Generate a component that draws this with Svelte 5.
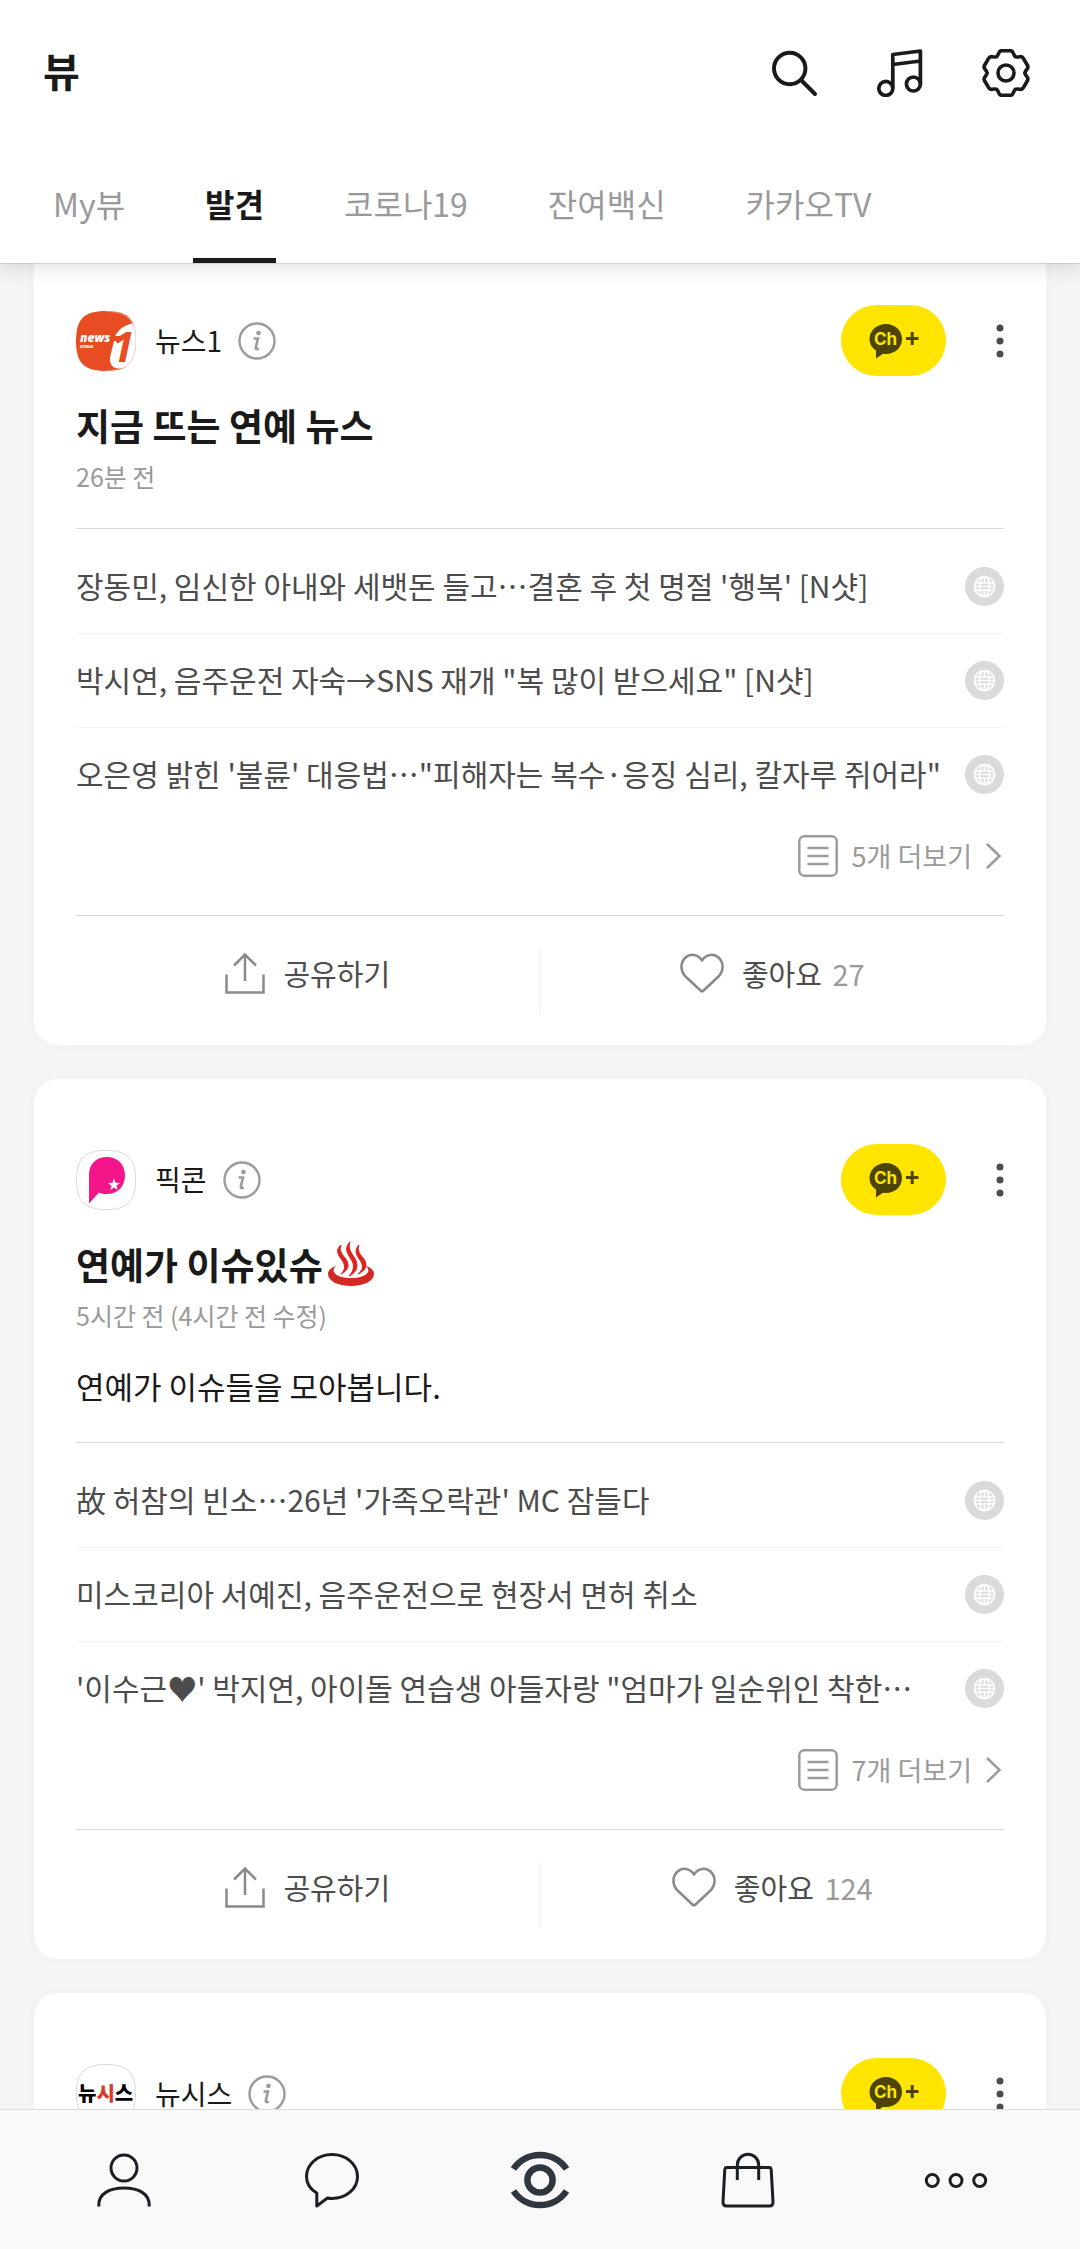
<script lang="ts">
  type Card = {
    channel: string;
    logo: string;
    title?: string;
    spring?: boolean;
    time?: string;
    desc?: string;
    items: string[];
    more?: number;
    likes?: number;
  };

  const tabs = ['My뷰', '발견', '코로나19', '잔여백신', '카카오TV'];
  let active = $state('발견');

  const cards: Card[] = [
    {
      channel: '뉴스1',
      logo: 'news1',
      title: '지금 뜨는 연예 뉴스',
      time: '26분 전',
      items: [
        "장동민, 임신한 아내와 세뱃돈 들고⋯결혼 후 첫 명절 '행복' [N샷]",
        '박시연, 음주운전 자숙→SNS 재개 "복 많이 받으세요" [N샷]',
        '오은영 밝힌 \'불륜\' 대응법⋯"피해자는 복수·응징 심리, 칼자루 쥐어라"'
      ],
      more: 5,
      likes: 27
    },
    {
      channel: '픽콘',
      logo: 'pickcon',
      title: '연예가 이슈있슈',
      spring: true,
      time: '5시간 전 (4시간 전 수정)',
      desc: '연예가 이슈들을 모아봅니다.',
      items: [
        "故 허참의 빈소⋯26년 '가족오락관' MC 잠들다",
        '미스코리아 서예진, 음주운전으로 현장서 면허 취소',
        "'이수근♥' 박지연, 아이돌 연습생 아들자랑 \"엄마가 일순위인 착한⋯"
      ],
      more: 7,
      likes: 124
    },
    { channel: '뉴시스', logo: 'newsis', items: [] }
  ];

  // One tooth of the gear, centred on the origin and pointing up; repeated every 60 degrees.
  function gearPath(cx: number, cy: number): string {
    const tooth = [
      [-9.2, -16.4], [-7.9, -18], [-7.2, -20], [-6.4, -22.4], [-4, -22.4],
      [4, -22.4], [6.4, -22.4], [7.2, -20], [7.9, -18], [9.2, -16.4]
    ];
    let d = '';
    for (let i = 0; i < 6; i++) {
      const a = (i * Math.PI) / 3;
      const p = tooth.map(([x, y]) =>
        (cx + x * Math.cos(a) - y * Math.sin(a)).toFixed(2) + ' ' +
        (cy + x * Math.sin(a) + y * Math.cos(a)).toFixed(2)
      );
      d += `${i ? 'L' : 'M'}${p[0]}Q${p[1]} ${p[2]}Q${p[3]} ${p[4]}L${p[5]}Q${p[6]} ${p[7]}Q${p[8]} ${p[9]}`;
    }
    return d + 'Z';
  }
  const gear = gearPath(24, 24);
</script>

<div class="app">
  <header class="top">
    <div class="bar">
      <h1>뷰</h1>
      <div class="tools">
        <button aria-label="검색">
          <svg width="48" height="48" viewBox="0 0 48 48" fill="none" stroke="#1a1a1a" stroke-width="4" stroke-linecap="round">
            <circle cx="19.7" cy="19.5" r="15.7" /><path d="M31 31L45 45" />
          </svg>
        </button>
        <button aria-label="음악">
          <svg width="48" height="48" viewBox="0 0 48 48" fill="none" stroke="#1a1a1a" stroke-width="3.7" stroke-linejoin="round">
            <path d="M16.8 39.5V5.5L44.4 2V35M16.8 15.5L44.4 12" />
            <circle cx="9.8" cy="39.4" r="7" /><circle cx="37.4" cy="35" r="7" />
          </svg>
        </button>
        <button aria-label="설정">
          <svg width="48" height="48" viewBox="0 0 48 48" fill="none" stroke="#1a1a1a" stroke-width="3.6" stroke-linejoin="round">
            <path d={gear} /><circle cx="24" cy="24" r="8" />
          </svg>
        </button>
      </div>
    </div>
    <nav class="tabs">
      {#each tabs as tab}
        <button class="tab" class:on={tab === active} onclick={() => (active = tab)}>{tab}</button>
      {/each}
    </nav>
  </header>

  <main class="feed">
    {#each cards as card, i}
      <article class="card" class:continued={i === 0}>
        <div class="profile">
          <span class="logo">
            {#if card.logo === 'news1'}
              <svg width="60" height="60" viewBox="0 0 60 60">
                <defs><clipPath id="sq"><path d="M30 0C52 0 60 8 60 30S52 60 30 60 0 52 0 30 8 0 30 0Z" /></clipPath></defs>
                <g clip-path="url(#sq)">
                  <rect width="60" height="60" fill="#e84c22" />
                  <path d="M39 25C43 18 49 13 60 12V42C57 53 51 58 42 57.500C35 57 33 51 34.500 44L38 30H45L46.500 25Z" fill="#fff" />
                </g>
                <text x="35" y="51" class="one">1</text>
                <text x="4" y="31" class="news">news</text>
                <text x="4" y="37" class="korea">KOREA</text>
                <path d="M30 .5C51 .5 59.500 9 59.500 30S51 59.500 30 59.500" fill="none" stroke="#d9cfc8" stroke-opacity=".5" />
              </svg>
            {:else if card.logo === 'pickcon'}
              <svg width="60" height="60" viewBox="0 0 60 60">
                <path d="M30 .5C51.500 .5 59.500 8.500 59.500 30S51.500 59.500 30 59.500 .5 51.500 .5 30 8.500 .5 30 .5Z" fill="#fff" stroke="#d9d9d9" />
                <path d="M13 53V25C13 14 20 7 31 7S49 15 49 25.500C49 36 42 44 31 44C28 44 25 43.500 23 42.500L13.500 53Z" fill="#f5158a" />
                <path d="M38 28.500L39.600 32.800L44 33L40.500 35.800L41.800 40L38 37.600L34.200 40L35.500 35.800L32 33L36.400 32.800Z" fill="#fff" />
              </svg>
            {:else}
              <svg width="60" height="60" viewBox="0 0 60 60">
                <path d="M30 .5C51.500 .5 59.500 8.500 59.500 30S51.500 59.500 30 59.500 .5 51.500 .5 30 8.500 .5 30 .5Z" fill="#fff" stroke="#d9d9d9" />
                <text x="2" y="37" class="newsis">뉴<tspan fill="#d8392b">시</tspan>스</text>
              </svg>
            {/if}
          </span>
          <span class="name">{card.channel}</span>
          <button class="info" aria-label="채널 정보">
            <svg width="38" height="38" viewBox="0 0 38 38">
              <circle cx="19" cy="19" r="17.500" fill="none" stroke="#9c9c9c" stroke-width="2.400" />
              <circle cx="20.500" cy="11" r="2.300" fill="#9c9c9c" />
              <path d="M15.500 16.500H20L17.800 25.500Q17.300 28 20.800 26.500" fill="none" stroke="#9c9c9c" stroke-width="2.600" />
            </svg>
          </button>
          <button class="follow" aria-label="채널 추가">
            <svg width="50" height="36" viewBox="0 0 50 36">
              <path d="M17 1C26 1 33 7.500 33 16S26 31 17 31C16 31 15 31 14 30.800L7 35.500V27.500C3 25 .5 21 .5 16C.5 7.500 8 1 17 1Z" fill="#4c4400" />
              <text x="5" y="22" class="ch">Ch</text>
              <path d="M37 15.500H49.500M43.200 9V22" stroke="#4c4400" stroke-width="3" />
            </svg>
          </button>
          <button class="kebab" aria-label="더보기 메뉴">
            <svg width="8" height="36" viewBox="0 0 8 36" fill="#4c4c4c">
              <circle cx="4" cy="5" r="3.500" /><circle cx="4" cy="18" r="3.500" /><circle cx="4" cy="31" r="3.500" />
            </svg>
          </button>
        </div>

        {#if card.title}
          <h2>
            {card.title}{#if card.spring}<svg class="spring" role="img" aria-label="온천" width="48" height="48" viewBox="0 0 48 48">
                <path d="M9 26C3 28 1 31 1 34C1 41 11 46 24 46S47 41 47 34C47 31 45 28 39 26C41 28 42 30 41 32C39 36 32 38 24 38S9 36 7 32C6 30 7 28 9 26Z" fill="#d22a22" />
                <path d="M14 5C8 10 11 15 15 20C19 26 18 30 14 34C22 30 23 24 18 18C14 13 12 10 14 5ZM23 2C17 8 20 13 24 19C28 25 27 31 22 36C31 32 32 24 27 17C23 11 21 8 23 2ZM32 5C27 10 29 15 33 20C37 26 36 30 31 34C40 30 41 24 36 18C32 13 30 10 32 5Z" fill="#e0221c" stroke="#e0221c" />
              </svg>{/if}
          </h2>
          <p class="time">{card.time}</p>
          {#if card.desc}<p class="desc">{card.desc}</p>{/if}

          <ul class="list">
            {#each card.items as item}
              <li>
                <a href="#article">
                  <span class="headline">{item}</span>
                  <svg width="39" height="39" viewBox="0 0 39 39" fill="none" stroke="#fff" stroke-width="1.700">
                    <circle cx="19.500" cy="19.500" r="19.500" fill="#dadada" stroke="none" />
                    <circle cx="19.500" cy="19.500" r="10" />
                    <ellipse cx="19.500" cy="19.500" rx="5" ry="10" />
                    <path d="M19.500 9.500V16M19.500 23V29.500M9.500 19.500H29.500M11 16H28M11 23H28" />
                  </svg>
                </a>
              </li>
            {/each}
          </ul>

          <button class="more">
            <svg width="40" height="42" viewBox="0 0 40 42" fill="none" stroke="#9c9c9c" stroke-width="2.500">
              <rect x="1.300" y="1.300" width="37.400" height="39.400" rx="5" />
              <path d="M9.500 13H30.500M9.500 21H30.500M9.500 29H30.500" />
            </svg>
            <span>{card.more}개 더보기</span>
            <svg width="18" height="28" viewBox="0 0 18 28" fill="none" stroke="#9c9c9c" stroke-width="2.500"><path d="M1 2L13.500 14L1 26" /></svg>
          </button>

          <div class="actions">
            <button>
              <svg width="40" height="42" viewBox="0 0 40 42" fill="none" stroke="#8a8a8a" stroke-width="2.500">
                <path d="M1.500 22.500V40.500H38.500V22.500M20 29V2.500M9 13.500L20 2.500L31 13.500" />
              </svg>
              <span>공유하기</span>
            </button>
            <button>
              <svg width="44" height="42" viewBox="0 0 44 42" fill="none" stroke="#8a8a8a" stroke-width="2.500" stroke-linejoin="round">
                <path d="M22 8.500C18 2 10 1 5 6C0 11 .5 19 5 24L20.500 38.500Q22 40 23.500 38.500L39 24C43.500 19 44 11 39 6C34 1 26 2 22 8.500Z" />
              </svg>
              <span>좋아요 <em>{card.likes}</em></span>
            </button>
          </div>
        {/if}
      </article>
    {/each}
  </main>

  <nav class="dock">
    <a href="#friends" aria-label="친구">
      <svg width="60" height="60" viewBox="0 0 60 60" fill="none" stroke="#1b1e23" stroke-width="3">
        <circle cx="30" cy="18" r="13" /><path d="M4.800 56.500V55C4.800 44 15 38 30 38S55.200 44 55.200 55V56.500" />
      </svg>
    </a>
    <a href="#chats" aria-label="채팅">
      <svg width="60" height="60" viewBox="0 0 60 60" fill="none" stroke="#1b1e23" stroke-width="3" stroke-linejoin="round">
        <path d="M14.800 43C8 39 4.500 33 4.500 26.500C4.500 14 16 4.500 30 4.500S55.500 14 55.500 26.500S44 48.500 30 48.500C28.500 48.500 27 48.500 25.500 48L14.800 56Z" />
      </svg>
    </a>
    <a href="#view" aria-label="뷰">
      <svg width="60" height="60" viewBox="0 0 60 60" fill="none" stroke="#2f3640" stroke-width="6.500">
        <circle cx="30" cy="30" r="12.600" /><path d="M3.500 19A32 32 0 0 1 56.500 19M3.500 41A32 32 0 0 0 56.500 41" />
      </svg>
    </a>
    <a href="#shop" aria-label="쇼핑">
      <svg width="60" height="60" viewBox="0 0 60 60" fill="none" stroke="#1b1e23" stroke-width="3" stroke-linejoin="round">
        <path d="M9 17.500H51Q53 17.500 53.200 19.500L55 52Q55 56 51.500 56H8.500Q5 56 5 52L6.800 19.500Q7 17.500 9 17.500Z" />
        <path d="M19.300 30V15A10.700 10.700 0 0 1 40.700 15V30" />
      </svg>
    </a>
    <a href="#etc" aria-label="더보기">
      <svg width="64" height="60" viewBox="0 0 64 60" fill="none" stroke="#1b1e23" stroke-width="3">
        <circle cx="8.300" cy="30.500" r="6" /><circle cx="32" cy="30.500" r="6" /><circle cx="55.700" cy="30.500" r="6" />
      </svg>
    </a>
  </nav>
</div>

<style>
  :global(body) {
    background: #f4f4f4;
  }
  .app {
    display: flex;
    flex-direction: column;
    height: 100vh;
    color: #1a1a1a;
    font-family: 'Noto Sans CJK KR', sans-serif;
  }
  button {
    padding: 0;
    border: 0;
    background: none;
    color: inherit;
    font: inherit;
    cursor: pointer;
  }
  svg {
    display: block;
    flex: none;
  }
  h1, h2, p, ul {
    margin: 0;
    padding: 0;
  }

  .top {
    z-index: 1;
    flex: none;
    background: #fff;
    box-shadow: 0 1px 1px rgba(0, 0, 0, 0.1), 0 4px 18px rgba(0, 0, 0, 0.13);
  }
  .bar {
    display: flex;
    align-items: center;
    justify-content: space-between;
    padding: 48px 50px 0 43px;
  }
  h1 {
    padding-bottom: 6px;
    font-size: 40px;
    line-height: 44px;
    font-weight: 700;
  }
  .tools {
    display: flex;
    gap: 58px;
  }
  .tabs {
    display: flex;
    gap: 56px;
    padding: 48px 41px 0;
  }
  .tab {
    padding: 33px 12px 31px;
    border-bottom: 5px solid transparent;
    color: #9a9a9a;
    font-size: 32px;
    line-height: 48px;
    white-space: nowrap;
  }
  .tab.on {
    border-color: #1a1a1a;
    color: #1a1a1a;
    font-weight: 700;
  }

  .feed {
    flex: 1;
    min-height: 0;
    overflow-y: auto;
    scrollbar-width: none;
    padding: 0 34px;
  }
  .card {
    margin-bottom: 34px;
    padding: 65px 42px 0;
    border-radius: 24px;
    background: #fff;
    box-shadow: 0 0 12px rgba(0, 0, 0, 0.02);
  }
  .card.continued {
    padding-top: 42px;
    border-radius: 0 0 24px 24px;
  }
  .profile {
    display: flex;
    align-items: center;
    height: 71px;
  }
  .name {
    margin: 0 16px 0 19px;
    padding-bottom: 2px;
    font-size: 28px;
    line-height: 40px;
  }
  .follow {
    display: flex;
    align-items: center;
    justify-content: center;
    width: 105px;
    height: 71px;
    margin-left: auto;
    border-radius: 36px;
    background: #ffe500;
  }
  .kebab {
    margin-left: 50px;
  }
  .news, .one, .korea, .ch {
    font-family: 'Open Sans', sans-serif;
    font-weight: 800;
  }
  .news {
    fill: #fff;
    font-size: 12px;
    font-style: italic;
  }
  .korea {
    fill: #fff;
    font-size: 4px;
    font-style: italic;
  }
  .one {
    fill: #e84c22;
    font-size: 42px;
    font-style: italic;
    font-weight: 700;
  }
  .ch {
    fill: #ffe500;
    font-family: Inter, sans-serif;
    font-size: 17px;
    font-weight: 700;
  }
  .newsis {
    font-size: 20px;
    font-weight: 900;
  }
  h2 {
    display: flex;
    align-items: center;
    gap: 4px;
    margin-top: 24px;
    font-size: 37px;
    line-height: 50px;
    font-weight: 700;
  }
  .time {
    margin-top: 8px;
    color: #9a9a9a;
    font-size: 25px;
    line-height: 36px;
  }
  .desc {
    margin-top: 31px;
    font-size: 31px;
    line-height: 44px;
  }
  .list {
    margin-top: 34px;
    padding-top: 11px;
    border-top: 1px solid #d9d9d9;
    list-style: none;
  }
  li + li {
    border-top: 1px solid #f2f2f2;
  }
  li a {
    display: flex;
    align-items: center;
    justify-content: space-between;
    gap: 20px;
    height: 93px;
    color: #4c4c4c;
    text-decoration: none;
  }
  .headline {
    overflow: hidden;
    padding-bottom: 4px;
    font-size: 30px;
    line-height: 44px;
    white-space: nowrap;
  }
  .more {
    display: flex;
    align-items: center;
    gap: 14px;
    margin: 14px 0 38px auto;
    color: #9a9a9a;
    font-size: 27px;
    line-height: 40px;
  }
  .actions {
    display: flex;
    align-items: center;
    height: 129px;
    border-top: 1px solid #d9d9d9;
  }
  .actions button {
    display: flex;
    flex: 1;
    align-items: center;
    justify-content: center;
    gap: 18px;
    height: 65px;
    padding-bottom: 16px;
    box-sizing: border-box;
    color: #4c4c4c;
    font-size: 29px;
    line-height: 40px;
  }
  .actions button + button {
    border-left: 1px solid #f2f2f2;
  }
  em {
    margin-left: 4px;
    color: #9a9a9a;
    font-style: normal;
  }

  .dock {
    z-index: 1;
    display: grid;
    grid-template-columns: repeat(5, 1fr);
    flex: none;
    padding: 0 20px;
    border-top: 1px solid #dcdcdc;
    background: #f9f9f9;
  }
  .dock a {
    display: flex;
    align-items: center;
    justify-content: center;
    padding: 40px 0 39px;
  }
</style>
